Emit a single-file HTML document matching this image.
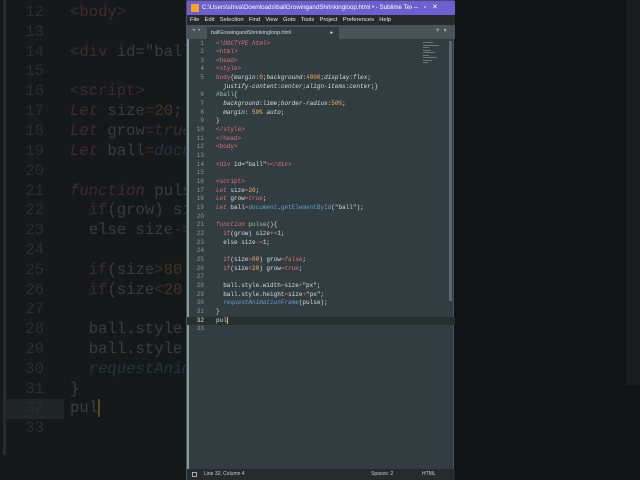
<!DOCTYPE html>
<html><head><style>
*{margin:0;padding:0;box-sizing:border-box}
body{width:640px;height:480px;overflow:hidden;background:#141819;position:relative;font-family:"Liberation Mono",monospace}
.left{position:absolute;left:0;top:0;width:190px;height:480px;background:#15191a;overflow:hidden}
.left .gut{position:absolute;left:3px;top:0;width:3px;height:455px;background:#262c2e}
.left .hl{position:absolute;left:6px;top:399px;width:58px;height:20px;background:#202527}
.left .ln{position:absolute;left:18px;width:26px;text-align:right;font-size:15.6px;color:#282f31}
.left .c{position:absolute;left:70px;font-size:15.6px;color:#363d40;white-space:pre}
.l-t{color:#3f2a2e}.l-k{color:#3f2a2e;font-style:italic}.l-n{color:#43351f}.l-b{color:#27323f;font-style:italic}
.right{position:absolute;left:454px;top:0;width:186px;height:480px;background:#111415}
.right .s{position:absolute;left:172px;top:0;width:14px;height:385px;background:#181c1d}
.win{position:absolute;left:186px;top:0;width:268px;height:480px;background:#323d42;border:1px solid #4a4a6a}
.title{position:absolute;left:0;top:0;width:268px;height:14px;background:#6d5fd0;color:#fff;font-family:"Liberation Sans",sans-serif;font-size:6.2px;line-height:14px;padding-left:15px;white-space:nowrap;overflow:hidden}
.title .ic{position:absolute;left:4px;top:3px;width:8px;height:8px;background:#f7a51c;border-radius:1px}
.title .b{position:absolute;top:0;font-size:7px}
.menu{position:absolute;left:0;top:14px;width:268px;height:10px;background:#262a2c;color:#e8e8e8;font-family:"Liberation Sans",sans-serif;font-size:5.8px;line-height:10px;white-space:pre;padding-left:3px;word-spacing:1px}
.tabs{position:absolute;left:0;top:24px;width:268px;height:14px;background:#4a5458}
.tab{position:absolute;left:20px;top:2px;width:132px;height:12px;background:#323d42;color:#d0d6d8;font-family:"Liberation Sans",sans-serif;font-size:5.3px;line-height:12px;padding-left:4px}
.code{position:absolute;left:0;top:38.5px;width:268px}
.row{height:8.66px;line-height:8.66px;font-size:6px;white-space:pre;position:relative;color:#d8dee0}
.row .n{position:absolute;left:0;width:17px;text-align:right;color:#8c9598}
.row .t{position:absolute;left:29px}
.row.cur{background:#27302f}
.row.cur .n{color:#e0e0e0}
.g{position:absolute;left:0;top:38px;width:2px;height:430px;background:#7fa18e}
.tg{color:#e06c75}.kw{color:#e06c75;font-style:italic}.nu{color:#f9ae58}.bl{color:#6699cc;font-style:italic}.fn{color:#99c794}.st{color:#d8dee0}.pr{color:#d8dee0;font-style:italic}
.sb{position:absolute;left:262px;top:40px;width:3px;height:260px;background:#5a666a}
.mini{position:absolute;left:236px;top:41px;width:20px;height:30px}
.mini i{display:block;height:1px;margin-bottom:1.5px;background:#6c7679}
.status{position:absolute;left:0;top:468px;width:268px;height:11px;background:#262c2e;color:#c8cccc;font-family:"Liberation Sans",sans-serif;font-size:5px;line-height:11px}
</style></head><body>
<div class="left">
<div class="gut"></div><div class="hl"></div>
<div class="ln" style="top:3px">12</div><div class="c" style="top:3px"><span class="l-t">&lt;body&gt;</span></div>
<div class="ln" style="top:23px">13</div>
<div class="ln" style="top:43px">14</div><div class="c" style="top:43px"><span class="l-t">&lt;div</span> id="ball</div>
<div class="ln" style="top:62px">15</div>
<div class="ln" style="top:82px">16</div><div class="c" style="top:82px"><span class="l-t">&lt;script&gt;</span></div>
<div class="ln" style="top:102px">17</div><div class="c" style="top:102px"><span class="l-k">Let</span> size<span class="l-t">=</span><span class="l-n">20</span>;</div>
<div class="ln" style="top:122px">18</div><div class="c" style="top:122px"><span class="l-k">Let</span> grow<span class="l-t">=</span><span class="l-k">true</span></div>
<div class="ln" style="top:142px">19</div><div class="c" style="top:142px"><span class="l-k">Let</span> ball<span class="l-t">=</span><span class="l-b">docu</span></div>
<div class="ln" style="top:162px">20</div>
<div class="ln" style="top:182px">21</div><div class="c" style="top:182px"><span class="l-k">function</span> puls</div>
<div class="ln" style="top:201px">22</div><div class="c" style="top:201px">  <span class="l-t">if</span>(grow) si</div>
<div class="ln" style="top:221px">23</div><div class="c" style="top:221px">  else size<span class="l-t">-=</span></div>
<div class="ln" style="top:241px">24</div>
<div class="ln" style="top:261px">25</div><div class="c" style="top:261px">  <span class="l-t">if</span>(size<span class="l-t">&gt;</span><span class="l-n">80</span>)</div>
<div class="ln" style="top:281px">26</div><div class="c" style="top:281px">  <span class="l-t">if</span>(size<span class="l-t">&lt;</span><span class="l-n">20</span>)</div>
<div class="ln" style="top:300px">27</div>
<div class="ln" style="top:320px">28</div><div class="c" style="top:320px">  ball.style.</div>
<div class="ln" style="top:340px">29</div><div class="c" style="top:340px">  ball.style.</div>
<div class="ln" style="top:360px">30</div><div class="c" style="top:360px">  <span class="l-b">requestAnim</span></div>
<div class="ln" style="top:380px">31</div><div class="c" style="top:380px">}</div>
<div class="ln" style="top:399px">32</div><div class="c" style="top:399px">pul<span style="border-left:2px solid #5a4a24"></span></div>
<div class="ln" style="top:419px">33</div>
</div>
<div class="right"><div class="s"></div></div>
<div class="win">
<div class="title"><div class="ic"></div>C:\Users\shiva\Downloads\ballGrowingandShrinkingloop.html • - Sublime Text<span class="b" style="left:225px;background:#6d5fd0;width:43px">&nbsp;–&nbsp;&nbsp;&nbsp;▫&nbsp;&nbsp;&nbsp;✕</span></div>
<div class="menu">File  Edit  Selection  Find  View  Goto  Tools  Project  Preferences  Help</div>
<div class="tabs"><span style="position:absolute;left:5px;top:2px;color:#cdd;font-size:5px">◂ ▸</span><div class="tab">ballGrowingandShrinkingloop.html<span style="position:absolute;right:6px">●</span></div><span style="position:absolute;left:249px;top:2px;color:#cdd;font-size:6px">+ ▾</span></div>
<div class="g"></div>
<div class="code">
<div class="row"><span class="n">1</span><span class="t"><span class="tg">&lt;!</span><span class="kw">DOCTYPE</span> <span class="kw">html</span><span class="tg">&gt;</span></span></div>
<div class="row"><span class="n">2</span><span class="t"><span class="tg">&lt;html&gt;</span></span></div>
<div class="row"><span class="n">3</span><span class="t"><span class="tg">&lt;head&gt;</span></span></div>
<div class="row"><span class="n">4</span><span class="t"><span class="tg">&lt;style&gt;</span></span></div>
<div class="row"><span class="n">5</span><span class="t"><span class="tg">body</span>{<span class="pr">margin</span>:<span class="nu">0</span>;<span class="pr">background</span>:<span class="nu">#000</span>;<span class="pr">display</span>:<span class="pr">flex</span>;</span></div>
<div class="row"><span class="n"></span><span class="t">  <span class="pr">justify-content</span>:<span class="pr">center</span>;<span class="pr">align-items</span>:<span class="pr">center</span>;}</span></div>
<div class="row"><span class="n">6</span><span class="t"><span class="fn">#ball</span>{</span></div>
<div class="row"><span class="n">7</span><span class="t">  <span class="pr">background</span>:<span class="pr">lime</span>;<span class="pr">border-radius</span>:<span class="nu">50%</span>;</span></div>
<div class="row"><span class="n">8</span><span class="t">  <span class="pr">margin</span>: <span class="nu">50%</span> <span class="pr">auto</span>;</span></div>
<div class="row"><span class="n">9</span><span class="t">}</span></div>
<div class="row"><span class="n">10</span><span class="t"><span class="tg">&lt;/style&gt;</span></span></div>
<div class="row"><span class="n">11</span><span class="t"><span class="tg">&lt;/head&gt;</span></span></div>
<div class="row"><span class="n">12</span><span class="t"><span class="tg">&lt;body&gt;</span></span></div>
<div class="row"><span class="n">13</span></div>
<div class="row"><span class="n">14</span><span class="t"><span class="tg">&lt;div</span> id=<span class="st">"ball"</span><span class="tg">&gt;&lt;/div&gt;</span></span></div>
<div class="row"><span class="n">15</span></div>
<div class="row"><span class="n">16</span><span class="t"><span class="tg">&lt;script&gt;</span></span></div>
<div class="row"><span class="n">17</span><span class="t"><span class="kw">Let</span> size<span class="tg">=</span><span class="nu">20</span>;</span></div>
<div class="row"><span class="n">18</span><span class="t"><span class="kw">Let</span> grow<span class="tg">=</span><span class="kw">true</span>;</span></div>
<div class="row"><span class="n">19</span><span class="t"><span class="kw">Let</span> ball<span class="tg">=</span><span class="bl">document</span>.<span class="bl" style="font-style:normal">getElementById</span>("ball");</span></div>
<div class="row"><span class="n">20</span></div>
<div class="row"><span class="n">21</span><span class="t"><span class="kw">function</span> <span class="fn">pulse</span>(){</span></div>
<div class="row"><span class="n">22</span><span class="t">  <span class="tg">if</span>(grow) size<span class="tg">+=</span>1;</span></div>
<div class="row"><span class="n">23</span><span class="t">  else size<span class="tg">-=</span>1;</span></div>
<div class="row"><span class="n">24</span></div>
<div class="row"><span class="n">25</span><span class="t">  <span class="tg">if</span>(size<span class="tg">&gt;</span><span class="nu">80</span>) grow<span class="tg">=</span><span class="kw">false</span>;</span></div>
<div class="row"><span class="n">26</span><span class="t">  <span class="tg">if</span>(size<span class="tg">&lt;</span><span class="nu">20</span>) grow<span class="tg">=</span><span class="kw">true</span>;</span></div>
<div class="row"><span class="n">27</span></div>
<div class="row"><span class="n">28</span><span class="t">  ball.style.width<span class="tg">=</span>size<span class="tg">+</span>"px";</span></div>
<div class="row"><span class="n">29</span><span class="t">  ball.style.height<span class="tg">=</span>size<span class="tg">+</span>"px";</span></div>
<div class="row"><span class="n">30</span><span class="t">  <span class="bl">requestAnimationFrame</span>(pulse);</span></div>
<div class="row"><span class="n">31</span><span class="t">}</span></div>
<div class="row cur"><span class="n">32</span><span class="t">pul<span style="border-left:1px solid #f9ae58"></span></span></div>
<div class="row"><span class="n">33</span></div>
</div>
<div class="mini"><i style="width:10px"></i><i style="width:16px"></i><i style="width:6px"></i><i style="width:8px"></i><i style="width:12px"></i><i style="width:6px"></i><i style="width:14px"></i><i style="width:9px"></i><i style="width:5px"></i></div>
<div class="sb"></div>
<div class="status"><span style="position:absolute;left:5px;top:3px;width:5px;height:5px;border:1px solid #aaa"></span><span style="position:absolute;left:17px">Line 32, Column 4</span><span style="position:absolute;left:184px">Spaces: 2</span><span style="position:absolute;left:235px">HTML</span></div>
</div>
</body></html>
